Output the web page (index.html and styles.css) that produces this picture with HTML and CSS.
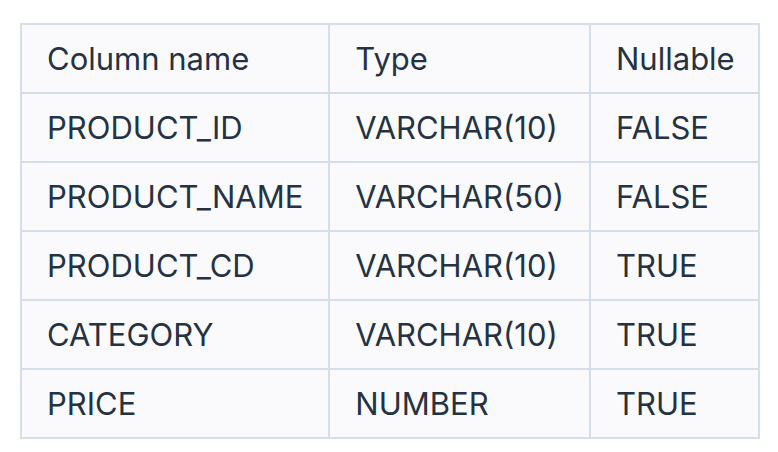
FILE: index.html
```html
<!DOCTYPE html>
<html>
<head>
<meta charset="utf-8">
<link rel="stylesheet" href="styles.css">
</head>
<body>
<table class="schema">
  <thead>
    <tr><th>Column name</th><th>Type</th><th>Nullable</th></tr>
  </thead>
  <tbody>
    <tr><td>PRODUCT_ID</td><td>VARCHAR(10)</td><td>FALSE</td></tr>
    <tr><td>PRODUCT_NAME</td><td>VARCHAR(50)</td><td>FALSE</td></tr>
    <tr><td>PRODUCT_CD</td><td>VARCHAR(10)</td><td>TRUE</td></tr>
    <tr><td>CATEGORY</td><td>VARCHAR(10)</td><td>TRUE</td></tr>
    <tr><td>PRICE</td><td>NUMBER</td><td>TRUE</td></tr>
  </tbody>
</table>
</body>
</html>
```
FILE: styles.css
```css
html, body {
  margin: 0;
  padding: 0;
  background: #ffffff;
}
body {
  padding: 23px 0 0 20px;
  font-family: "Inter", "Liberation Sans", sans-serif;
  color: #243242;
}
.schema {
  border-collapse: collapse;
  background: #fafafc;
}
.schema th,
.schema td {
  border: 2px solid #d5dfe9;
  padding: 0 25px;
  height: 67px;
  font-size: 31px;
  font-weight: 400;
  text-align: left;
  vertical-align: middle;
  white-space: nowrap;
  line-height: 40px;
}
.schema th:last-child,
.schema td:last-child {
  padding-right: 23px;
}
```
